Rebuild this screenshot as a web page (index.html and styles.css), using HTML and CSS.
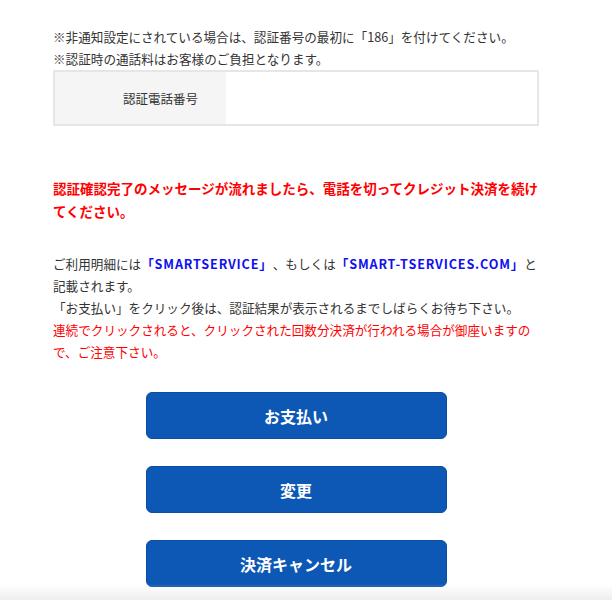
FILE: index.html
```html
<!DOCTYPE html>
<html lang="ja">
<head>
<meta charset="utf-8">
<link rel="stylesheet" href="styles.css">
</head>
<body>
<main class="page">
  <p class="note">※非通知設定にされている場合は、認証番号の最初に「186」を付けてください。<br>※認証時の通話料はお客様のご負担となります。</p>
  <div class="auth-table">
    <div class="auth-label">認証電話番号</div>
    <div class="auth-value"></div>
  </div>
  <p class="alert">認証確認完了のメッセージが流れましたら、電話を切ってクレジット決済を続けてください。</p>
  <p class="info">ご利用明細には<span class="brand">「SMARTSERVICE」</span>、もしくは<span class="brand">「SMART-TSERVICES.COM」</span>と<br>記載されます。<br>「お支払い」をクリック後は、認証結果が表示されるまでしばらくお待ち下さい。<br><span class="warn">連続でクリックされると、クリックされた回数分決済が行われる場合が御座いますので、ご注意下さい。</span></p>
  <div class="actions">
    <button class="btn" type="button">お支払い</button>
    <button class="btn" type="button">変更</button>
    <button class="btn" type="button">決済キャンセル</button>
  </div>
</main>
<div class="bottom-fade"></div>
</body>
</html>
```

FILE: styles.css
```css
html, body {
  margin: 0;
  padding: 0;
  background: #fff;
}
body {
  font-family: "Noto Sans CJK JP", "Noto Sans", sans-serif;
  color: #333;
  text-spacing-trim: space-all;
}
.page {
  width: 486px;
  margin-left: 53px;
  padding-top: 26px;
}
p {
  margin: 0;
}
.note {
  font-size: 12.6px;
  line-height: 21.5px;
}
.auth-table {
  margin-top: 1px;
  display: flex;
  height: 52px;
  border: 2px solid #e6e6e6;
}
.auth-label {
  width: 143px;
  padding-right: 28px;
  background: #f5f5f5;
  font-size: 12.5px;
  display: flex;
  align-items: center;
  justify-content: flex-end;
}
.auth-value {
  flex: 1;
  background: #fff;
}
.alert {
  margin-top: 51px;
  color: #f00;
  font-weight: bold;
  font-size: 13.5px;
  line-height: 23px;
}
.info {
  margin-top: 30px;
  font-size: 12.6px;
  line-height: 22px;
}
.brand {
  color: #1010f0;
  font-weight: bold;
  letter-spacing: 0.85px;
}
.warn {
  color: #f00;
}
.actions {
  margin-top: 29px;
  display: flex;
  flex-direction: column;
  align-items: center;
  gap: 27px;
}
.btn {
  width: 301px;
  height: 47px;
  background: #0d57b5;
  border: 1px solid #0a4ea6;
  border-radius: 6px;
  color: #fff;
  font-family: "Noto Sans CJK JP", "Noto Sans", sans-serif;
  font-size: 16px;
  font-weight: bold;
  padding: 0;
  text-spacing-trim: space-all;
}
.bottom-fade {
  position: fixed;
  left: 0;
  right: 0;
  bottom: 0;
  height: 16px;
  background: linear-gradient(to bottom, rgba(235,235,235,0), rgba(235,235,235,0.85));
  pointer-events: none;
}
```
